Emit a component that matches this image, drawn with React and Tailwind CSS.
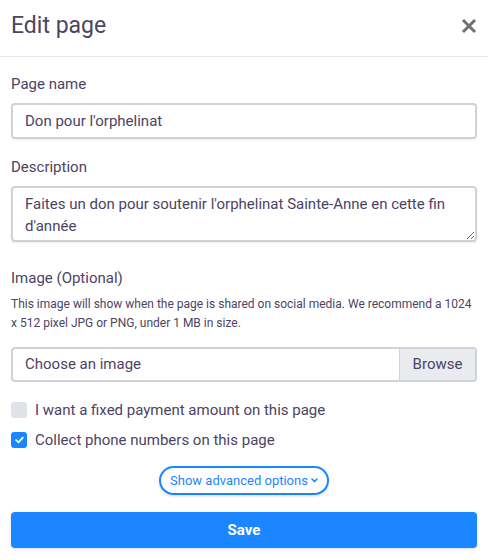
import React from 'react';

const EditPage = () => {
  return (
    <div className="w-[488px] h-[560px] bg-white text-[#4b4464] overflow-hidden" style={{ fontFamily: 'Roboto, "Noto Sans", sans-serif' }}>
      <div className="h-[57px] border-b border-[#e6e6e6] flex items-center justify-between pl-[11px] pr-[11px]">
        <h2 className="text-[23px] leading-none pb-[5px]">Edit page</h2>
        <svg width="16" height="16" viewBox="0 0 16 16" className="mb-[4px]">
          <path d="M2 2 L14 14 M14 2 L2 14" stroke="#727272" strokeWidth="3" strokeLinecap="butt" />
        </svg>
      </div>

      <div className="px-[11px] pt-[16px]">
        <label className="block text-[15px] leading-[22px] mb-[8px]">Page name</label>
        <input
          className="block w-full h-[36px] px-[12px] text-[15px] border-2 border-[#cfd2d9] rounded-[4px] shadow-[0_1px_2px_rgba(0,0,0,0.08)] text-[#4b4464] outline-none"
          defaultValue="Don pour l'orphelinat"
        />

        <label className="block text-[15px] leading-[22px] mt-[17px] mb-[8px]">Description</label>
        <textarea
          className="block w-full h-[56px] px-[12px] py-[5px] text-[15px] leading-[22px] border-2 border-[#cfd2d9] rounded-[4px] shadow-[0_1px_2px_rgba(0,0,0,0.08)] text-[#4b4464] outline-none"
          defaultValue="Faites un don pour soutenir l'orphelinat Sainte-Anne en cette fin d'année"
        />

        <label className="block text-[15px] leading-[22px] mt-[25px]">Image (Optional)</label>
        <p className="text-[12px] leading-[19px] mt-[6px]">
          This image will show when the page is shared on social media. We recommend a 1024 x 512 pixel JPG or PNG, under 1 MB in size.
        </p>

        <div className="flex h-[35px] mt-[14px] border-2 border-[#cfd2d9] rounded-[4px] overflow-hidden">
          <div className="flex-1 flex items-center px-[12px] text-[15px]">Choose an image</div>
          <div className="w-[76px] flex items-center justify-center bg-[#e9ebef] border-l border-[#cfd2d9] text-[15px]">Browse</div>
        </div>

        <div className="flex items-center gap-[8px] h-[22px] mt-[17px] text-[15px]">
          <span className="w-[16px] h-[16px] rounded-[3px] bg-[#dfe2e7]" />
          <span>I want a fixed payment amount on this page</span>
        </div>
        <div className="flex items-center gap-[8px] h-[22px] mt-[8px] text-[15px]">
          <span className="w-[16px] h-[16px] rounded-[3px] bg-[#1a86ff] flex items-center justify-center">
            <svg width="9" height="8" viewBox="0 0 9 8">
              <path d="M1.2 4.2 L3.5 6.3 L7.8 1.6" fill="none" stroke="white" strokeWidth="1.8" strokeLinecap="round" strokeLinejoin="round" />
            </svg>
          </span>
          <span>Collect phone numbers on this page</span>
        </div>

        <div className="flex justify-center mt-[15px]">
          <button className="h-[29px] px-[9px] flex items-center gap-[3px] rounded-full border-2 border-[#1a86ff] text-[#1a86ff] text-[13px] shadow-[0_1px_3px_rgba(0,0,0,0.15)]">
            Show advanced options
            <svg width="7" height="5" viewBox="0 0 7 5">
              <path d="M1 1 L3.5 3.6 L6 1" fill="none" stroke="#1a86ff" strokeWidth="1.5" strokeLinecap="round" strokeLinejoin="round" />
            </svg>
          </button>
        </div>

        <button className="block w-full h-[36px] mt-[17px] rounded-[4px] bg-[#1a86ff] text-white font-bold text-[15px] shadow-[0_1px_3px_rgba(0,0,0,0.15)]">
          Save
        </button>
      </div>
    </div>
  );
};

export default EditPage;
